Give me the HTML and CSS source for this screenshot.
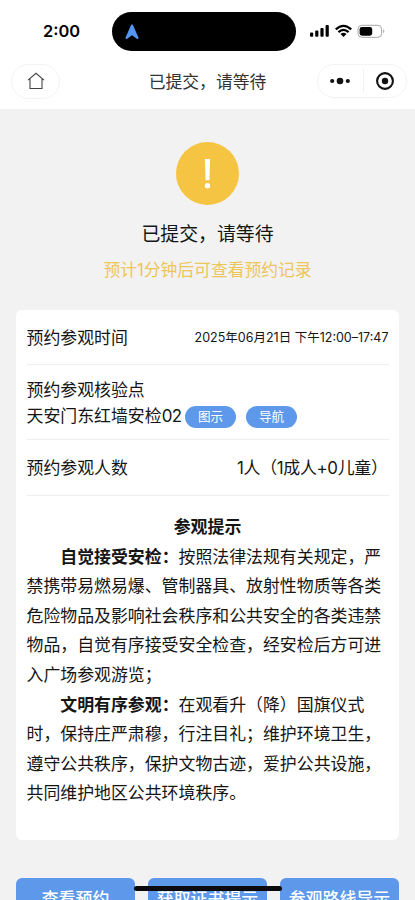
FILE: index.html
```html
<!DOCTYPE html>
<html lang="zh-CN">
<head>
<meta charset="utf-8">
<meta name="viewport" content="width=device-width, initial-scale=1">
<title>已提交，请等待</title>
<link rel="stylesheet" href="styles.css">
</head>
<body>
<div class="screen">
  <header class="top">
    <div class="status">
      <span class="clock">2:00</span>
      <div class="island">
        <svg width="14" height="16" viewBox="0 0 14 16"><path d="M7 0.5 C7.6 0.5 8 1 8.3 1.8 L13.3 13.2 C13.8 14.6 13 15.4 11.8 14.7 L7 11.3 L2.2 14.7 C1 15.4 .2 14.6 .7 13.2 L5.7 1.8 C6 1 6.4 .5 7 .5Z" fill="#5296f0"/></svg>
      </div>
      <svg class="signals" width="78" height="16" viewBox="0 0 78 16">
        <g fill="#000">
          <rect x="1" y="9.5" width="3.2" height="4.3" rx="1"/>
          <rect x="6.2" y="7.5" width="3.2" height="6.3" rx="1"/>
          <rect x="11.4" y="4.9" width="3.2" height="8.9" rx="1"/>
          <rect x="16.6" y="2" width="3.2" height="11.8" rx="1"/>
        </g>
        <g fill="none" stroke="#000" stroke-width="2.3">
          <path d="M26.8 6.4 Q34.5 -.6 42.2 6.4"/>
          <path d="M29.4 9.2 Q34.5 4.6 39.6 9.2"/>
        </g>
        <path d="M31.5 10.9 Q34.5 8.6 37.5 10.9 L34.5 13.9Z"/>
        <rect x="49" y="2.3" width="23.6" height="12" rx="3.8" fill="#fff" stroke="#a6a6a6"/>
        <rect x="50.6" y="3.9" width="12.6" height="8.8" rx="2.4"/>
        <path d="M74.2 6.3 Q76.6 8.2 74.2 10.2Z" fill="#a6a6a6"/>
      </svg>
    </div>
    <div class="nav">
      <div class="home">
        <svg width="18" height="18" viewBox="0 0 18 18" fill="none" stroke="#444" stroke-width="1.1"><path d="M1 8.2 L9 1.3 L17 8.2 M3 6.6 V16.5 H15 V6.6"/></svg>
      </div>
      <h1 class="nav-title">已提交，请等待</h1>
      <div class="capsule">
        <svg width="20" height="8" viewBox="0 0 20 8" fill="#111"><circle cx="2.2" cy="4" r="2.1"/><circle cx="10" cy="4" r="3.3"/><circle cx="17.8" cy="4" r="2.1"/></svg>
        <span class="divider"></span>
        <svg width="18" height="18" viewBox="0 0 18 18"><circle cx="9" cy="9" r="7.9" fill="none" stroke="#111" stroke-width="2.1"/><circle cx="9" cy="9" r="3.2" fill="#111"/></svg>
      </div>
    </div>
  </header>
  <main>
    <section class="result">
      <svg width="63" height="63" viewBox="0 0 63 63"><circle cx="31.5" cy="31.5" r="31.5" fill="#f5c443"/><path d="M28.9 17 H34.1 L33.4 38.3 H29.6Z" fill="#fff"/><circle cx="31.5" cy="43.7" r="2.7" fill="#fff"/></svg>
      <h2 class="result-title">已提交，请等待</h2>
      <p class="result-note">预计1分钟后可查看预约记录</p>
    </section>
    <section class="card">
      <div class="row row-time"><span>预约参观时间</span><span class="time">2025年06月21日 下午12:00–17:47</span></div>
      <div class="row row-place">
        <div>预约参观核验点</div>
        <div class="place"><span>天安门东红墙安检<span class="digits">02</span></span><span class="pill">图示</span><span class="pill">导航</span></div>
      </div>
      <div class="row row-people"><span>预约参观人数</span><span class="people">1人（1成人+0儿童）</span></div>
      <article class="tips">
        <h3>参观提示</h3>
        <p><strong>自觉接受安检：</strong>按照法律法规有关规定，严禁携带易燃易爆、管制器具、放射性物质等各类危险物品及影响社会秩序和公共安全的各类违禁物品，自觉有序接受安全检查，经安检后方可进入广场参观游览；</p>
        <p><strong>文明有序参观：</strong>在观看升（降）国旗仪式时，保持庄严肃穆，行注目礼；维护环境卫生，遵守公共秩序，保护文物古迹，爱护公共设施，共同维护地区公共环境秩序。</p>
      </article>
    </section>
    <div class="actions">
      <div class="button">查看预约</div>
      <div class="button">获取证书提示</div>
      <div class="button">参观路线导示</div>
    </div>
  </main>
  <div class="home-indicator"></div>
</div>
</body>
</html>
```
FILE: styles.css
```css
* {
  box-sizing: border-box;
}

body,
h1,
h2,
h3,
p {
  margin: 0;
}

body {
  font-family: Inter, "Noto Sans CJK SC", sans-serif;
  font-size: 16.9px;
  color: #151515;
  text-spacing-trim: space-all;
}

svg {
  display: block;
  flex: none;
}

.screen {
  position: relative;
  height: 900px;
  overflow: hidden;
  background: #f2f2f2;
}

.top {
  height: 109px;
  background: #fff;
}

.status {
  display: flex;
  align-items: center;
  height: 51px;
  padding: 12px 0 0 43px;
}

.clock {
  width: 69px;
  font-size: 16.4px;
  font-weight: 600;
  line-height: 39px;
  color: #000;
}

.island {
  display: flex;
  align-items: center;
  width: 184px;
  height: 39px;
  padding-left: 13px;
  border-radius: 20px;
  background: #000;
}

.signals {
  margin: 0 0 2px 13px;
}

.nav {
  display: flex;
  align-items: center;
  justify-content: space-between;
  height: 58px;
  padding: 2px 8px 0 11px;
}

.home,
.capsule {
  display: flex;
  align-items: center;
  border: 1px solid #f3f3f3;
  border-radius: 18px;
}

.home {
  justify-content: center;
  width: 49px;
  height: 35px;
  margin-right: 38px;
}

.nav-title {
  padding-top: 2px;
  font-size: 16.8px;
  font-weight: 400;
  line-height: 30px;
  color: #333;
}

.capsule {
  justify-content: space-between;
  width: 90px;
  height: 34px;
  padding: 0 12px;
}

.divider {
  width: 1px;
  height: 24px;
  margin-left: 1px;
  background: #f2f2f2;
}

.result {
  display: flex;
  flex-direction: column;
  align-items: center;
  height: 201px;
  padding-top: 33px;
}

.result-title {
  margin-top: 15px;
  font-size: 18.9px;
  font-weight: 400;
  line-height: 30px;
}

.result-note {
  margin-top: 7px;
  font-size: 16.8px;
  line-height: 26px;
  color: #edc65a;
}

.card {
  height: 530px;
  margin: 0 16px;
  padding: 0 10.5px;
  border-radius: 6px;
  background: #fff;
}

.row {
  border-bottom: 1px solid #eee;
}

.row-time,
.row-people {
  display: flex;
  align-items: center;
  justify-content: space-between;
  padding-bottom: 2px;
}

.row-time {
  height: 55px;
}

.time {
  font-size: 12.5px;
}

.row-place {
  height: 75px;
  padding-top: 12px;
  line-height: 26px;
}

.place {
  display: flex;
  align-items: center;
}

.digits {
  letter-spacing: -0.6px;
}

.people {
  letter-spacing: -0.3px;
  padding-right: 1px;
}

.pill {
  width: 51px;
  height: 22px;
  margin: 1px 10px 0 0;
  border-radius: 11px;
  background: #5d98ea;
  color: #fff;
  font-size: 12.6px;
  line-height: 21px;
  text-align: center;
}

.place > span:first-child {
  width: 158.5px;
  white-space: nowrap;
}

.row-people {
  height: 56px;
}

.tips {
  padding-top: 17px;
  line-height: 29.6px;
}

.tips h3 {
  font-size: 16.9px;
  font-weight: 700;
  text-align: center;
}

.tips p {
  text-indent: 2em;
}

.actions {
  display: grid;
  grid-template-columns: repeat(3, 119px);
  justify-content: space-between;
  margin: 38px 16px 0;
}

.button {
  height: 42px;
  border-radius: 6px;
  background: #5d98ea;
  color: #fff;
  font-weight: 500;
  line-height: 43px;
  text-align: center;
}

.home-indicator {
  position: absolute;
  left: 134px;
  bottom: 9px;
  width: 148px;
  height: 5px;
  border-radius: 3px;
  background: #0b0b0d;
}
```
